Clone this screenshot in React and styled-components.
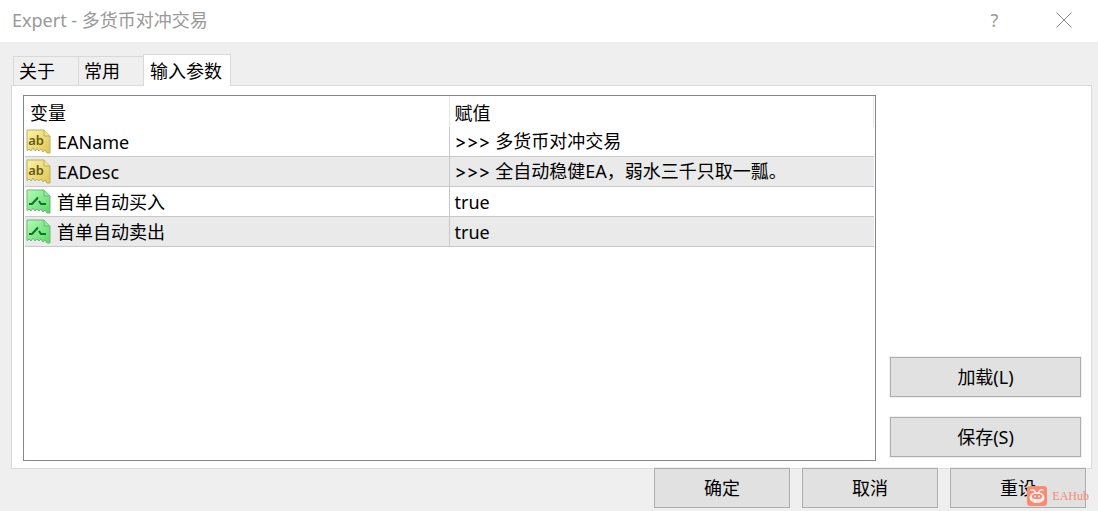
import React, { useState } from "react";
import styled, { createGlobalStyle } from "styled-components";

const GlobalStyle = createGlobalStyle`
  * {
    box-sizing: border-box;
  }

  body {
    margin: 0;
    background-color: #efefef;
    color: #000;
    font-family: "Noto Sans", "Noto Sans CJK SC", sans-serif;
    font-size: 18px;
    line-height: 24px;
  }

  button {
    font: inherit;
    color: inherit;
  }
`;

const Dialog = styled.div`
  position: relative;
  display: flex;
  flex-direction: column;
  min-height: 100vh;
  padding-bottom: 3px;
`;

const TitleBar = styled.header`
  display: flex;
  align-items: center;
  justify-content: space-between;
  height: 42px;
  padding-left: 12px;
  padding-bottom: 3px;
  background-color: #fff;
  color: #999;
`;

const Title = styled.h1`
  margin: 0;
  font-size: 18px;
  font-weight: 400;
`;

const TitleButtons = styled.div`
  display: flex;
`;

const TitleButton = styled.button`
  display: flex;
  align-items: center;
  justify-content: center;
  width: 69px;
  height: 39px;
  padding: 0;
  border: none;
  background: none;
  color: #999;
`;

const TabList = styled.div`
  display: flex;
  align-items: flex-end;
  padding: 12px 13px 0;
`;

const Tab = styled.button`
  height: ${({ $active }) => ($active ? 32 : 29)}px;
  width: ${({ $active }) => ($active ? 88 : 65)}px;
  padding: 0 0 0 ${({ $active }) => ($active ? 6 : 5)}px;
  margin-bottom: ${({ $active }) => ($active ? -1 : 0)}px;
  border: 1px solid #d9d9d9;
  border-bottom: none;
  border-right-width: ${({ $active }) => ($active ? 1 : 0)}px;
  background-color: ${({ $active }) => ($active ? "#fff" : "#efefef")};
  text-align: left;
  white-space: nowrap;
  z-index: ${({ $active }) => ($active ? 1 : 0)};
`;

const Panel = styled.section`
  display: flex;
  flex: 1;
  gap: 14px;
  margin: 0 6px 0 11px;
  padding: 9px 10px 7px 11px;
  border: 1px solid #d9d9d9;
  background-color: #fff;
`;

const ParamBox = styled.div`
  flex: 1;
  padding: 0 1px;
  border: 1px solid #828790;
`;

const ParamTable = styled.table`
  width: 100%;
  table-layout: fixed;
  border-collapse: separate;
  border-spacing: 0;
`;

const HeadCell = styled.th`
  height: 31px;
  padding: 2px 5px 0;
  border-right: 1px solid #e5e5e5;
  font-weight: 400;
  text-align: left;
`;

const Row = styled.tr`
  background-color: ${({ $striped }) => ($striped ? "#eaeaea" : "#fff")};
`;

const Cell = styled.td`
  height: 30px;
  padding: 0 0 0 5px;
  border-bottom: 1px solid #c8c8c8;
`;

const NameCell = styled(Cell)`
  padding-left: 1px;
  border-right: 1px solid #c8c8c8;
`;

const NameContent = styled.div`
  display: flex;
  align-items: center;
  gap: 6px;
`;

const Marker = styled.span`
  font-family: Inter, sans-serif;
  white-space: pre;
`;

const SideActions = styled.div`
  display: flex;
  flex-direction: column;
  justify-content: flex-end;
  gap: 20px;
  width: 191px;
  padding-bottom: 4px;
`;

const Button = styled.button`
  height: 40px;
  width: ${({ $wide }) => ($wide ? "100%" : "136px")};
  padding: 0;
  border: 1px solid #adadad;
  background-color: #e1e1e1;
  box-shadow: 0 0 0 1px #f0f0f0;

  &:hover {
    border-color: #0078d7;
  }
`;

const Footer = styled.footer`
  display: flex;
  justify-content: flex-end;
  gap: 12px;
  margin-top: -1px;
  padding-right: 12px;
`;

const Watermark = styled.div`
  position: absolute;
  right: 9px;
  bottom: 5px;
  display: flex;
  align-items: center;
  gap: 5px;
  color: #f58a74;
  font-family: "Liberation Serif", serif;
  font-size: 12px;
  line-height: 20px;
  pointer-events: none;
`;

const IconSvg = styled.svg`
  flex: none;
  width: 25px;
  height: 25px;
`;

const PAPER =
  "M1 1h17l6 6v17h-3l-2-3-2 2-2-3-2 2-2-2-2 2-2-3-2 3-2-2-1.500 1.500H1z";

const StringIcon = () => (
  <IconSvg viewBox="0 0 25 25" aria-hidden="true">
    <defs>
      <linearGradient id="paperYellow" x1="0" y1="0" x2="1" y2="1">
        <stop offset="0" stopColor="#fbf3a8" />
        <stop offset="1" stopColor="#dcc650" />
      </linearGradient>
    </defs>
    <path d={PAPER} fill="url(#paperYellow)" stroke="#bcae66" strokeLinejoin="round" />
    <path d="M18 1v6h6" fill="#f0e68c" stroke="#bcae66" />
    <text
      x="10"
      y="16"
      textAnchor="middle"
      fontFamily="Noto Sans, sans-serif"
      fontSize="13"
      fontWeight="600"
      fill="#685a10"
    >
      ab
    </text>
  </IconSvg>
);

const BoolIcon = () => (
  <IconSvg viewBox="0 0 25 25" aria-hidden="true">
    <defs>
      <linearGradient id="paperGreen" x1="0" y1="0" x2="1" y2="1">
        <stop offset="0" stopColor="#b4fcb4" />
        <stop offset="1" stopColor="#55d868" />
      </linearGradient>
    </defs>
    <path d={PAPER} fill="url(#paperGreen)" stroke="#70b67a" strokeLinejoin="round" />
    <path d="M18 1v6h6" fill="#8eee96" stroke="#70b67a" />
    <path
      d="M3 15h3l6-6.500M13 12l2 3h5"
      fill="none"
      stroke="#14702a"
      strokeWidth="2"
    />
  </IconSvg>
);

const CloseIcon = () => (
  <svg width="16" height="16" viewBox="0 0 16 16" aria-hidden="true">
    <path d="M.5.5l15 15M15.500.5l-15 15" stroke="#888" strokeWidth="1" />
  </svg>
);

const HubLogo = () => (
  <svg width="20" height="20" viewBox="0 0 20 20" aria-hidden="true">
    <rect width="20" height="20" rx="3" fill="#f98a74" />
    <path
      d="M4 4q3-1 4.500 2.500M16 4q-3-1-4.500 2.500"
      fill="none"
      stroke="#ffeeea"
      strokeWidth="1.500"
      strokeLinecap="round"
    />
    <ellipse cx="10" cy="11.500" rx="7.500" ry="5.500" fill="#ffeeea" />
    <rect x="5" y="8" width="10" height="5" rx="2.500" fill="#f98a74" />
    <circle cx="8" cy="10.500" r="1" fill="#ffeeea" />
    <circle cx="12" cy="10.500" r="1" fill="#ffeeea" />
  </svg>
);

const tabs = ["关于", "常用", "输入参数"];

const params = [
  { name: "EAName", type: "string", marker: ">>> ", value: "多货币对冲交易" },
  {
    name: "EADesc",
    type: "string",
    marker: ">>> ",
    value: "全自动稳健EA，弱水三千只取一瓢。",
  },
  { name: "首单自动买入", type: "bool", value: "true" },
  { name: "首单自动卖出", type: "bool", value: "true" },
];

const App = () => {
  const [activeTab, setActiveTab] = useState("输入参数");

  return (
    <>
      <GlobalStyle />
      <Dialog role="dialog" aria-labelledby="dialog-title" lang="zh-CN">
        <TitleBar>
          <Title id="dialog-title">Expert - 多货币对冲交易</Title>
          <TitleButtons>
            <TitleButton type="button">?</TitleButton>
            <TitleButton type="button" aria-label="关闭">
              <CloseIcon />
            </TitleButton>
          </TitleButtons>
        </TitleBar>

        <TabList role="tablist">
          {tabs.map((tab) => (
            <Tab
              key={tab}
              type="button"
              role="tab"
              aria-selected={tab === activeTab}
              $active={tab === activeTab}
              onClick={() => setActiveTab(tab)}
            >
              {tab}
            </Tab>
          ))}
        </TabList>

        <Panel role="tabpanel">
          <ParamBox>
            <ParamTable>
              <thead>
                <tr>
                  <HeadCell scope="col">变量</HeadCell>
                  <HeadCell scope="col">赋值</HeadCell>
                </tr>
              </thead>
              <tbody>
                {params.map((param, index) => (
                  <Row key={param.name} $striped={index % 2 === 1}>
                    <NameCell>
                      <NameContent>
                        {param.type === "string" ? <StringIcon /> : <BoolIcon />}
                        {param.name}
                      </NameContent>
                    </NameCell>
                    <Cell>
                      {param.marker && <Marker>{param.marker}</Marker>}
                      {param.value}
                    </Cell>
                  </Row>
                ))}
              </tbody>
            </ParamTable>
          </ParamBox>
          <SideActions>
            <Button type="button" $wide>加载(L)</Button>
            <Button type="button" $wide>保存(S)</Button>
          </SideActions>
        </Panel>

        <Footer>
          <Button type="button">确定</Button>
          <Button type="button">取消</Button>
          <Button type="button">重设</Button>
        </Footer>

        <Watermark>
          <HubLogo />
          EAHub
        </Watermark>
      </Dialog>
    </>
  );
};

export default App;
